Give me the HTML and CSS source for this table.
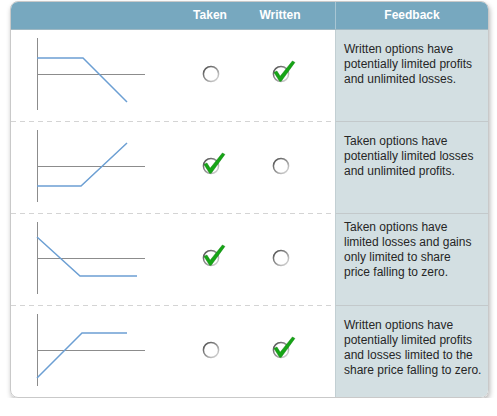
FILE: index.html
```html
<!DOCTYPE html>
<html>
<head>
<meta charset="utf-8">
<link rel="stylesheet" href="styles.css">
</head>
<body>
<div class="card">
  <div class="head">
    <div class="hcell"></div>
    <div class="hcell">Taken</div>
    <div class="hcell">Written</div>
    <div class="hcell"></div>
    <div class="hcell hfb">Feedback</div>
  </div>

  <div class="row">
    <div class="opts">
      <div class="chart">
        <svg width="164" height="91" viewBox="0 0 164 91">
          <line class="axis" x1="26.5" y1="8" x2="26.5" y2="80"/>
          <line class="axis" x1="26" y1="44.5" x2="134" y2="44.5"/>
          <polyline class="pay" points="26,28 72,28 116,72"/>
        </svg>
      </div>
      <div class="opt"><svg class="radio" width="28" height="28" viewBox="0 0 28 28"><use href="#circ"/></svg></div>
      <div class="opt"><svg class="radio" width="28" height="28" viewBox="0 0 28 28"><use href="#circ"/><use href="#tick"/></svg></div>
    </div>
    <div class="fb">Written options have potentially limited profits and unlimited losses.</div>
  </div>

  <div class="row">
    <div class="opts">
      <div class="chart">
        <svg width="164" height="91" viewBox="0 0 164 91">
          <line class="axis" x1="26.5" y1="8" x2="26.5" y2="80"/>
          <line class="axis" x1="26" y1="44.5" x2="134" y2="44.5"/>
          <polyline class="pay" points="26,64 70,64 116,21"/>
        </svg>
      </div>
      <div class="opt"><svg class="radio" width="28" height="28" viewBox="0 0 28 28"><use href="#circ"/><use href="#tick"/></svg></div>
      <div class="opt"><svg class="radio" width="28" height="28" viewBox="0 0 28 28"><use href="#circ"/></svg></div>
    </div>
    <div class="fb">Taken options have potentially limited losses and unlimited profits.</div>
  </div>

  <div class="row">
    <div class="opts">
      <div class="chart">
        <svg width="164" height="91" viewBox="0 0 164 91">
          <line class="axis" x1="26.5" y1="8" x2="26.5" y2="80"/>
          <line class="axis" x1="26" y1="44.5" x2="134" y2="44.5"/>
          <polyline class="pay" points="26,23 69,62 126,62"/>
        </svg>
      </div>
      <div class="opt"><svg class="radio" width="28" height="28" viewBox="0 0 28 28"><use href="#circ"/><use href="#tick"/></svg></div>
      <div class="opt"><svg class="radio" width="28" height="28" viewBox="0 0 28 28"><use href="#circ"/></svg></div>
    </div>
    <div class="fb fb-tight">Taken options have limited losses and gains only limited to share price falling to zero.</div>
  </div>

  <div class="row">
    <div class="opts">
      <div class="chart">
        <svg width="164" height="91" viewBox="0 0 164 91">
          <line class="axis" x1="26.5" y1="8" x2="26.5" y2="80"/>
          <line class="axis" x1="26" y1="44.5" x2="134" y2="44.5"/>
          <polyline class="pay" points="26,72 71,27 116,27"/>
        </svg>
      </div>
      <div class="opt"><svg class="radio" width="28" height="28" viewBox="0 0 28 28"><use href="#circ"/></svg></div>
      <div class="opt"><svg class="radio" width="28" height="28" viewBox="0 0 28 28"><use href="#circ"/><use href="#tick"/></svg></div>
    </div>
    <div class="fb">Written options have potentially limited profits and losses limited to the share price falling to zero.</div>
  </div>
</div>

<svg class="defs" width="0" height="0">
  <defs>
    <linearGradient id="rg" x1="0" y1="0" x2="1" y2="1">
      <stop offset="0" stop-color="#4a4a4a"/>
      <stop offset="0.55" stop-color="#9a9a9a"/>
      <stop offset="1" stop-color="#e2e2e2"/>
    </linearGradient>
    <g id="circ"><circle cx="12" cy="16" r="7.6" fill="#fff" stroke="url(#rg)" stroke-width="1.5"/></g>
    <g id="tick"><path d="M5 14.5 L7.9 13 L11.2 18.2 L23.4 3 L25.9 4.4 L12.2 23.3 L10.6 23.3 Z" fill="#16a516" stroke="#0d800d" stroke-width="0.5" stroke-linejoin="round"/></g>
  </defs>
</svg>
</body>
</html>
```

FILE: styles.css
```css
html, body {
  margin: 0;
  padding: 0;
  background: #fff;
}

body {
  font-family: "Liberation Sans", Arial, sans-serif;
}

.card {
  margin: 1px 0 0 10px;
  width: 477px;
  border: 1px solid #c9c9c9;
  border-radius: 8px;
  overflow: hidden;
  box-shadow: 1px 3px 5px rgba(0, 0, 0, 0.28);
}

.head {
  display: grid;
  grid-template-columns: 164px 70px 70px 20px 1fr;
  height: 28px;
  background: #77a8bf;
  border-bottom: 1px solid #9fb8c3;
  box-sizing: border-box;
}

.hcell {
  display: flex;
  align-items: center;
  justify-content: center;
  color: #fff;
  font-weight: bold;
  font-size: 12px;
  padding-bottom: 1px;
}

.hfb {
  border-left: 1px solid #a8c6d4;
}

.row {
  display: grid;
  grid-template-columns: 324px 1fr;
  height: 91px;
}

.row + .row {
  height: 92px;
}

.opts {
  display: grid;
  grid-template-columns: 164px 70px 70px 20px;
}

.row + .row .opts {
  padding-top: 1px;
  background-image: repeating-linear-gradient(to right, #d4d4d4 0 5px, transparent 5px 9px);
  background-size: 100% 1px;
  background-repeat: no-repeat;
}

.chart svg {
  display: block;
}

.axis {
  stroke: #8c8c8c;
  stroke-width: 1;
}

.pay {
  fill: none;
  stroke: #6c9fd3;
  stroke-width: 1.5;
}

.opt {
  display: flex;
  align-items: center;
  justify-content: center;
}

.radio {
  display: block;
  margin-left: 6px;
  margin-bottom: 7px;
}

.fb {
  background: #d3dfe2;
  border-left: 1px solid #c2cfd3;
  color: #262626;
  font-size: 12px;
  line-height: 15px;
  padding: 12px 6px 0 8px;
}

.row + .row .fb {
  border-top: 1px solid #c3c9cb;
}

.fb-tight {
  padding-top: 6px;
  padding-right: 11px;
}

.defs {
  position: absolute;
  left: 0;
  top: 0;
}
```
